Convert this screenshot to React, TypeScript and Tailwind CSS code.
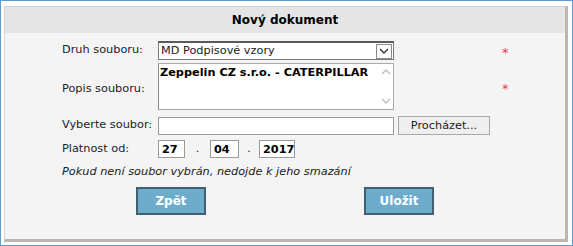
import { useState } from 'react'

function Chevron({ dir = 'down', className = '' }: { dir?: 'up' | 'down'; className?: string }) {
  return (
    <svg width="10" height="6" viewBox="0 0 10 6" className={className}>
      <path d={dir === 'down' ? 'M1 1 L5 5 L9 1' : 'M1 5 L5 1 L9 5'} fill="none" stroke="currentColor" strokeWidth="1.4" />
    </svg>
  )
}

export default function App() {
  const [day, setDay] = useState('27')
  const [month, setMonth] = useState('04')
  const [year, setYear] = useState('2017')

  return (
    <div className="w-[573px] h-[246px] bg-white border border-[#5f9bd3] pl-[3px] pt-[5px] font-['DejaVu_Sans',sans-serif] text-[11.3px] text-[#222]">
      {/* panel */}
      <div className="w-[564px] h-[236px] bg-[#f4f4f4] border border-[#d4d4d4] border-r-[3px] border-b-[3px] border-r-[#bdb6ae] border-b-[#bdb6ae] flex flex-col">
        <div className="h-[26px] bg-[#e5e5e5] flex items-center justify-center font-bold text-[12px] text-black">Nový dokument</div>

        <div className="pl-[57px] pt-[8px] flex flex-col">
          {/* Druh souboru */}
          <div className="flex items-center h-[19px]">
            <span className="w-[96px]">Druh souboru:</span>
            <div className="w-[236px] h-[19px] bg-white border border-[#7a7a7a] border-t-2 border-t-[#5a5a5a] flex items-center justify-between pl-[2px]">
              <span>MD Podpisové vzory</span>
              <div className="w-[16px] h-[15px] border border-[#8a8a8a] bg-white flex items-center justify-center text-[#333] mr-[1px]">
                <Chevron />
              </div>
            </div>
            <span className="ml-[108px] mt-[4px] text-[#e8405a] text-[13px] leading-none">*</span>
          </div>

          {/* Popis souboru */}
          <div className="flex items-center mt-[3px]">
            <span className="w-[96px] pt-[5px]">Popis souboru:</span>
            <div className="w-[236px] h-[47px] bg-white border border-[#a8a8a8] border-l-[#8a8a8a] flex">
              <div className="flex-1 font-bold text-black pl-[1px] pt-[1px]">Zeppelin CZ s.r.o. - CATERPILLAR</div>
              <div className="w-[14px] flex flex-col justify-between items-center py-[5px] text-[#bdbdbd]">
                <Chevron dir="up" />
                <Chevron />
              </div>
            </div>
            <span className="ml-[108px] mt-[4px] text-[#e8405a] text-[13px] leading-none">*</span>
          </div>

          {/* Vyberte soubor */}
          <div className="flex items-center mt-[6px]">
            <span className="w-[96px]">Vyberte soubor:</span>
            <div className="w-[236px] h-[18px] bg-white border border-[#9a9a9a]" />
            <button className="ml-[4px] w-[92px] h-[19px] bg-[#efefef] border border-[#a8a8a8] text-[#222] leading-none">Procházet...</button>
          </div>

          {/* Platnost od */}
          <div className="flex items-center mt-[5px]">
            <span className="w-[96px]">Platnost od:</span>
            <input value={day} onChange={e => setDay(e.target.value)} className="w-[27px] h-[18px] bg-white border border-[#9a9a9a] font-bold text-black pl-[3px] outline-none" />
            <span className="w-[25px] text-center">.</span>
            <input value={month} onChange={e => setMonth(e.target.value)} className="w-[29px] h-[18px] bg-white border border-[#9a9a9a] font-bold text-black pl-[3px] outline-none" />
            <span className="w-[20px] text-center">.</span>
            <input value={year} onChange={e => setYear(e.target.value)} className="w-[36px] h-[18px] bg-white border border-[#9a9a9a] font-bold text-black pl-[3px] outline-none" />
          </div>

          <div className="italic mt-[6px]">Pokud není soubor vybrán, nedojde k jeho smazání</div>

          {/* buttons */}
          <div className="flex mt-[6px] pl-[74px]">
            <button className="w-[70px] h-[28px] bg-[#6eaccb] border-2 border-[#3f5f73] text-white font-bold text-[12px]">Zpět</button>
            <button className="ml-[158px] w-[70px] h-[28px] bg-[#6eaccb] border-2 border-[#3f5f73] text-white font-bold text-[12px]">Uložit</button>
          </div>
        </div>
      </div>
    </div>
  )
}
